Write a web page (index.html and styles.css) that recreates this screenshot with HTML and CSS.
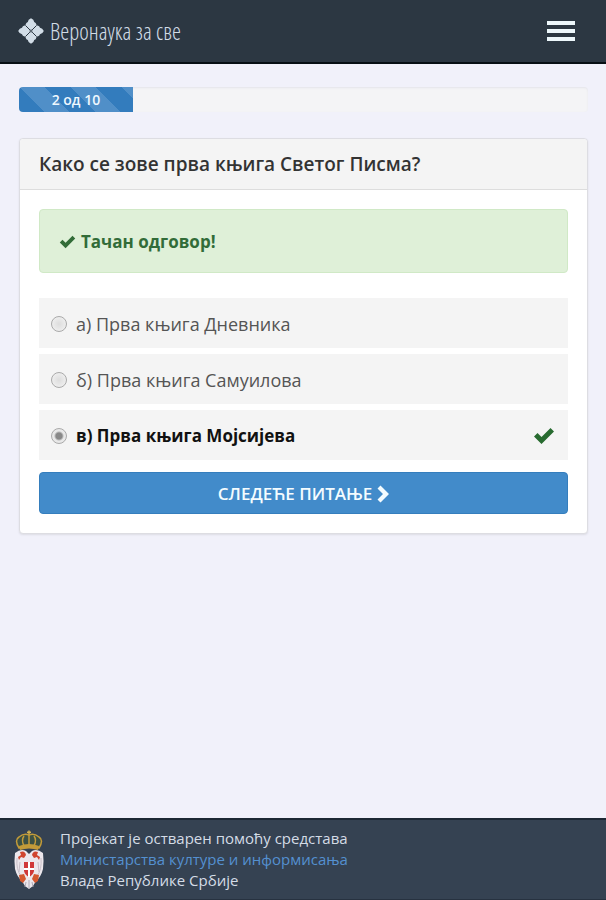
FILE: index.html
```html
<!DOCTYPE html>
<html lang="sr">
<head>
<meta charset="utf-8">
<meta name="viewport" content="width=device-width, initial-scale=1">
<title>Веронаука за све</title>
<link rel="stylesheet" href="styles.css">
</head>
<body>
<header class="navbar">
  <a class="brand" href="#">
    <svg class="brand-icon" viewBox="0 0 26 26" aria-hidden="true">
      <g fill="currentColor">
        <path d="M13 12.800 L12 11 C9 11.800 7 9 7.600 6.500 Q8 4.500 9.800 4 Q10 1.500 13 .2 Q16 1.500 16.200 4 Q18 4.500 18.400 6.500 C19 9 17 11.800 14 11 Z"/>
        <path d="M13 12.800 L12 11 C9 11.800 7 9 7.600 6.500 Q8 4.500 9.800 4 Q10 1.500 13 .2 Q16 1.500 16.200 4 Q18 4.500 18.400 6.500 C19 9 17 11.800 14 11 Z" transform="rotate(90 13 13)"/>
        <path d="M13 12.800 L12 11 C9 11.800 7 9 7.600 6.500 Q8 4.500 9.800 4 Q10 1.500 13 .2 Q16 1.500 16.200 4 Q18 4.500 18.400 6.500 C19 9 17 11.800 14 11 Z" transform="rotate(180 13 13)"/>
        <path d="M13 12.800 L12 11 C9 11.800 7 9 7.600 6.500 Q8 4.500 9.800 4 Q10 1.500 13 .2 Q16 1.500 16.200 4 Q18 4.500 18.400 6.500 C19 9 17 11.800 14 11 Z" transform="rotate(270 13 13)"/>
      </g>
      <path d="M7.500 7.500 L11.500 11.500 M18.500 7.500 L14.500 11.500 M7.500 18.500 L11.500 14.500 M18.500 18.500 L14.500 14.500" stroke="#2c3742"/>
    </svg>
    <span>Веронаука за све</span>
  </a>
  <button class="menu-toggle" type="button" aria-label="Мени">
    <span class="bar"></span><span class="bar"></span><span class="bar"></span>
  </button>
</header>

<main class="content">
  <div class="progress" role="progressbar" aria-valuenow="2" aria-valuemin="0" aria-valuemax="10">
    <div class="progress-bar" style="width: 20%">2 од 10</div>
  </div>

  <form class="panel">
    <h1 class="panel-heading">Како се зове прва књига Светог Писма?</h1>
    <div class="panel-body">
      <div class="alert" role="status">
        <svg class="check-small" viewBox="0 0 22 18" aria-hidden="true"><path d="M1 9.500 L4.500 6 L8.500 10 L17.500 1 L21 4.500 L8.500 17 Z" fill="currentColor"/></svg>
        <strong>Тачан одговор!</strong>
      </div>
      <div class="options">
        <label class="option"><input type="radio" name="answer"><span>а) Прва књига Дневника</span></label>
        <label class="option"><input type="radio" name="answer"><span>б) Прва књига Самуилова</span></label>
        <label class="option correct"><input type="radio" name="answer" checked><span>в) Прва књига Мојсијева</span>
          <svg class="check-large" viewBox="0 0 22 18" aria-hidden="true"><path d="M1 9.500 L4.500 6 L8.500 10 L17.500 1 L21 4.500 L8.500 17 Z" fill="currentColor"/></svg>
        </label>
      </div>
      <button class="next" type="button">
        <span>СЛЕДЕЋЕ ПИТАЊЕ</span>
        <svg class="chevron" viewBox="0 0 12 18" aria-hidden="true"><path d="M3.500 .5 L12 9 L3.500 17.500 L.5 14.500 L6 9 L.5 3.500 Z" fill="currentColor"/></svg>
      </button>
    </div>
  </form>
</main>

<footer class="footer">
  <svg class="arms" viewBox="0 0 30 60" aria-hidden="true">
    <path d="M15 .5 V5 M13 2.300 H17" stroke="#d0b050" stroke-width="1.500"/>
    <path d="M5 18 Q0 10 5 7 Q10 3 15 5 Q20 3 25 7 Q30 10 25 18 Q15 14 5 18Z" fill="#3d5144" stroke="#c39b39" stroke-width="1.500"/>
    <path d="M15 5 V15 M10 6 Q7 10 10 16 M20 6 Q23 10 20 16" fill="none" stroke="#c39b39" stroke-width="1.500"/>
    <path d="M5 16 Q15 12 25 16 L24 20 Q15 17 6 20Z" fill="#c39b39"/>
    <path d="M1 23 Q7 18 12 21 L15 24 L18 21 Q23 18 29 23 Q30 30 29 39 Q27 47 22 51 L19 56 L15 59 L11 56 L8 51 Q3 47 1 39 Q0 30 1 23Z" fill="#ece7ec"/>
    <path d="M6 22 Q11 20 12 25 L10 28 L7 27 L5 30 L4 27 L7 25Z M24 22 Q19 20 18 25 L20 28 L23 27 L25 30 L26 27 L23 25Z" fill="#d0452f"/>
    <path d="M10 32 H20 V41 Q19 45 15 47 Q11 45 10 41Z" fill="#d03838"/>
    <path d="M15 32 V47 M10 39 H20" stroke="#fff" stroke-width="2"/>
    <path d="M3 28 Q2 40 7 46 M27 28 Q28 40 23 46 M6 32 L5 42 M24 32 L25 42" fill="none" stroke="#c9bfc8"/>
    <path d="M5 45 L10 44 L12 49 L9 53 L6 51Z M25 45 L20 44 L18 49 L21 53 L24 51Z" fill="#d4582f"/>
    <path d="M12 52 L11 57 M15 50 V58 M18 52 L19 57" stroke="#b0aab6"/>
  </svg>
  <p class="credit">Пројекат је остварен помоћу средстава<br><a href="#">Министарства културе и информисања</a><br>Владе Републике Србије</p>
</footer>
</body>
</html>
```

FILE: styles.css
```css
* {
  box-sizing: border-box;
}

body {
  margin: 0;
  min-height: 100vh;
  display: flex;
  flex-direction: column;
  background: #f1f1fa;
  color: #333;
  font-family: "Open Sans", "Noto Sans", sans-serif;
  font-size: 17px;
  line-height: 24px;
}

.navbar {
  display: flex;
  align-items: center;
  justify-content: space-between;
  height: 64px;
  padding: 0 31px 0 18px;
  background: #2c3742;
  border-bottom: 2px solid #080f14;
}

.brand {
  display: flex;
  align-items: center;
  gap: 6px;
  color: #d2dde7;
  font-family: "Open Sans Condensed Light", "Open Sans Light Condensed", "Open Sans Condensed", Roboto, sans-serif;
  font-size: 23px;
  font-weight: 300;
  text-decoration: none;
}

.brand-icon {
  width: 26px;
  height: 26px;
}

.menu-toggle {
  display: flex;
  flex-direction: column;
  gap: 4px;
  padding: 0;
  border: 0;
  background: none;
}

.bar {
  width: 28px;
  height: 4px;
  background: #edf7fb;
}

.content {
  flex: 1;
  padding: 23px 18px 24px 19px;
}

.progress {
  height: 25px;
  margin-bottom: 26px;
  overflow: hidden;
  background: #f4f4f6;
  border-radius: 4px;
  box-shadow: inset 0 1px 2px #e4e4ea;
}

.progress-bar {
  height: 100%;
  background: repeating-linear-gradient(45deg, #337cbd 0 18px, #508fc8 18px 36px);
  color: #eef8ff;
  font-size: 14px;
  font-weight: 600;
  line-height: 25px;
  text-align: center;
}

.panel {
  background: #fff;
  border: 1px solid #dddde2;
  border-radius: 4px;
  box-shadow: 0 1px 2px #dcdce4;
}

.panel-heading {
  margin: 0;
  padding: 13px 19px;
  background: #f4f4f4;
  border-bottom: 1px solid #ddd;
  border-radius: 4px 4px 0 0;
  font-size: 19px;
  font-weight: 600;
}

.panel-body {
  padding: 19px;
}

.alert {
  display: flex;
  align-items: center;
  gap: 5px;
  height: 64px;
  margin-bottom: 25px;
  padding: 2px 19px 0;
  background: #dff0d8;
  border: 1px solid #d0e9c6;
  border-radius: 4px;
  color: #326c38;
}

.check-small {
  width: 17px;
  height: 14px;
}

.options {
  display: grid;
  gap: 6px;
  margin-bottom: 12px;
}

.option {
  display: flex;
  align-items: center;
  gap: 9px;
  height: 50px;
  padding: 2px 13px 0 12px;
  background: #f4f4f4;
  color: #555;
  font-size: 18px;
}

.option input {
  appearance: none;
  width: 16px;
  height: 16px;
  margin: 0;
  border: 1px solid #aaa;
  border-radius: 50%;
  background: radial-gradient(#ddd, #f4f4f4);
}

.option input:checked {
  background: radial-gradient(circle, #888 0 3px, #e8e8e8 5px);
}

.option.correct {
  color: #111;
  font-size: 17px;
  font-weight: 700;
}

.check-large {
  width: 22px;
  height: 18px;
  margin-left: auto;
  color: #286b30;
}

.next {
  display: flex;
  align-items: center;
  justify-content: center;
  gap: 5px;
  width: 100%;
  height: 42px;
  padding: 2px 0 0;
  background: #428bca;
  border: 1px solid #357ebd;
  border-radius: 4px;
  color: #f4fcff;
  font: inherit;
  font-weight: 600;
}

.chevron {
  width: 12px;
  height: 18px;
}

.footer {
  display: flex;
  align-items: center;
  gap: 16px;
  height: 82px;
  padding: 0 14px;
  background: #354252;
  border-top: 2px solid #1d2834;
  border-bottom: 1px solid #273240;
}

.arms {
  width: 30px;
  height: 60px;
}

.credit {
  margin: 0;
  color: #d4dce6;
  font-size: 15px;
  line-height: 21px;
}

.credit a {
  color: #5490d0;
  text-decoration: none;
}
```
